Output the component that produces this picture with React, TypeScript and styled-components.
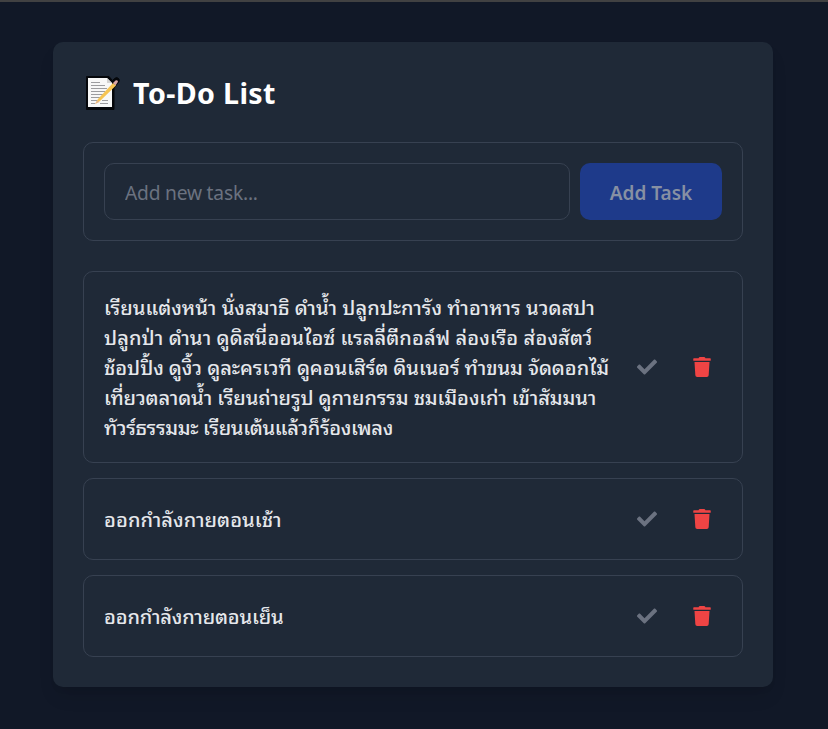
import React from "react";
import styled, { createGlobalStyle } from "styled-components";
import { FaCheck, FaTrash } from "react-icons/fa";

const GlobalStyle = createGlobalStyle`
  *, *::before, *::after { box-sizing: border-box; }
  body {
    margin: 0;
    background: #111827;
    font-family: "Noto Sans", sans-serif;
    color: #e5e7eb;
  }
  button, input { font: inherit; }
`;

const Page = styled.main`
  min-height: 729px;
  padding: 40px 55px 0 53px;
  border-top: 2px solid #414142;
  background: #111827;
`;

const Card = styled.section`
  width: 720px;
  height: 645px;
  padding: 30px;
  border-radius: 10px;
  background: #1f2937;
  box-shadow: 0 12px 19px -4px rgba(0, 0, 0, 0.1), 0 5px 8px -5px rgba(0, 0, 0, 0.1);
`;

const Title = styled.h1`
  display: flex;
  align-items: center;
  gap: 13px;
  height: 43px;
  margin: 0 0 27px;
  padding-left: 3px;
  color: #fff;
  font: 700 28.6px/43px "Noto Sans", sans-serif;
  white-space: nowrap;
`;

const TitleText = styled.span`
  letter-spacing: 0.38px;
  padding-bottom: 2px;
`;

const Form = styled.form`
  display: flex;
  gap: 10px;
  height: 99px;
  padding: 20px;
  margin-bottom: 30px;
  border: 1px solid #374151;
  border-radius: 10px;
`;

const TaskInput = styled.input`
  flex: 1;
  min-width: 0;
  height: 57px;
  padding: 2px 20px 0;
  border: 1px solid #374151;
  border-radius: 10px;
  outline: none;
  background: transparent;
  color: #e5e7eb;
  font: 400 19.2px "Noto Sans", sans-serif;
  letter-spacing: -0.2px;
  &::placeholder { color: #6b7280; opacity: 1; }
`;

const AddButton = styled.button`
  width: 142px;
  height: 57px;
  padding: 2px 0 0;
  border: 0;
  border-radius: 10px;
  background: #1e3a8a;
  color: #8790a3;
  font: 600 19px "Noto Sans", sans-serif;
`;

const TaskList = styled.ul`
  display: flex;
  flex-direction: column;
  gap: 15px;
  margin: 0;
  padding: 0;
  list-style: none;
`;

const Task = styled.li<{ $tall?: boolean }>`
  display: flex;
  align-items: center;
  justify-content: space-between;
  height: ${({ $tall }) => ($tall ? 192 : 82)}px;
  padding: 0 20px;
  border: 1px solid #374151;
  border-radius: 10px;
`;

const TaskText = styled.div`
  padding-bottom: 2px;
  font: 500 20px/30px "Noto Sans Thai Looped", "Noto Looped Thai", "Loma", "Garuda", "Waree", "Noto Sans", sans-serif;
`;

const Line = styled.span<{ $spacing: number }>`
  display: block;
  width: max-content;
  white-space: nowrap;
  letter-spacing: ${({ $spacing }) => $spacing}px;
`;

const Actions = styled.div`
  display: flex;
  align-items: center;
  gap: 36px;
  padding-right: 11px;
`;

const IconButton = styled.button<{ $danger?: boolean }>`
  display: flex;
  padding: 0;
  border: 0;
  background: transparent;
  color: ${({ $danger }) => ($danger ? "#ef4444" : "#6b7280")};
  svg { width: ${({ $danger }) => ($danger ? 18 : 20)}px; height: 20px; }
`;

const MemoIcon = styled.svg`
  width: 34px;
  height: 34px;
  margin-bottom: 1px;
`;

const Memo = () => (
  <MemoIcon viewBox="0 0 34 34" aria-hidden="true">
    <path d="M.5.5H23l3.5 4 2-2Q31 .5 33 3q1 2-1 4l-4 5v21.5H.5z" fill="#05070b" stroke="#05070b" strokeLinejoin="round" />
    <path d="M2 2h19l5 5v24H2z" fill="#f7f7f7" />
    <path d="M21 2v5h5z" fill="#d2d2d2" />
    <path d="M5 6.5h9M5 9.5h14M5 12.5h16M5 15.5h14M5 18.5h12M5 21.5h11M5 24.5h7M16 24.5h6M5 27.5h4M14 27.5h8" stroke="#9c9c9f" strokeWidth="1" />
    <path d="M9 28l3-5L27 7l3 2.5L14 25z" fill="#f6c453" />
    <path d="M27 7l2.5-2.5q2-.8 2.5 1.2L29.5 9.5z" fill="#d9a5a5" />
    <path d="M9 28l2.5-4 2 2z" fill="#e8b88c" />
  </MemoIcon>
);

type Row = { text: string; spacing: number };

const tasks: Row[][] = [
  [
    { text: "เรียนแต่งหน้า นั่งสมาธิ ดำน้ำ ปลูกปะการัง ทำอาหาร นวดสปา", spacing: 0.03 },
    { text: "ปลูกป่า ดำนา ดูดิสนี่ออนไอซ์ แรลลี่ตีกอล์ฟ ล่องเรือ ส่องสัตว์", spacing: 0.11 },
    { text: "ช้อปปิ้ง ดูงิ้ว ดูละครเวที ดูคอนเสิร์ต ดินเนอร์ ทำขนม จัดดอกไม้", spacing: -0.04 },
    { text: "เที่ยวตลาดน้ำ เรียนถ่ายรูป ดูกายกรรม ชมเมืองเก่า เข้าสัมมนา", spacing: -0.1 },
    { text: "ทัวร์ธรรมมะ เรียนเต้นแล้วก็ร้องเพลง", spacing: -0.3 },
  ],
  [{ text: "ออกกำลังกายตอนเช้า", spacing: 0.06 }],
  [{ text: "ออกกำลังกายตอนเย็น", spacing: -0.17 }],
];

export default function App() {
  return (
    <>
      <GlobalStyle />
      <Page>
        <Card>
          <Title><Memo /><TitleText>To-Do List</TitleText></Title>
          <Form onSubmit={(e) => e.preventDefault()}>
            <TaskInput placeholder="Add new task..." />
            <AddButton type="submit" disabled>Add Task</AddButton>
          </Form>
          <TaskList>
            {tasks.map((rows) => (
              <Task key={rows[0].text} $tall={rows.length > 1}>
                <TaskText>
                  {rows.map((r) => <Line key={r.text} $spacing={r.spacing}>{r.text}</Line>)}
                </TaskText>
                <Actions>
                  <IconButton aria-label="Complete"><FaCheck /></IconButton>
                  <IconButton aria-label="Delete" $danger><FaTrash /></IconButton>
                </Actions>
              </Task>
            ))}
          </TaskList>
        </Card>
      </Page>
    </>
  );
}
